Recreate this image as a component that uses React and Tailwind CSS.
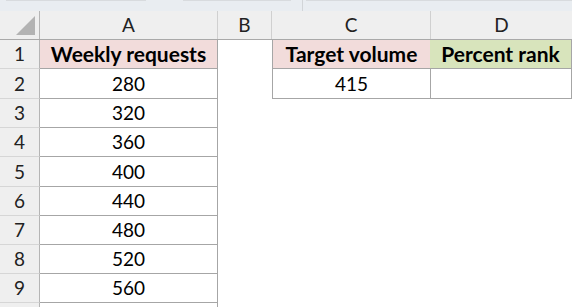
import React from "react";

const rows = [
  { n: 1, h: "h-[29px]" },
  { n: 2, h: "h-[30px]" },
  { n: 3, h: "h-[29px]" },
  { n: 4, h: "h-[29px]" },
  { n: 5, h: "h-[30px]" },
  { n: 6, h: "h-[29px]" },
  { n: 7, h: "h-[29px]" },
  { n: 8, h: "h-[29px]" },
  { n: 9, h: "h-[29px]" },
];

const aVals = ["Weekly requests", "280", "320", "360", "400", "440", "480", "520", "560"];

export default function App() {
  const font = { fontFamily: "Lato, 'Open Sans', sans-serif" };
  return (
    <div className="w-[572px] h-[307px] overflow-hidden bg-white text-[19px] leading-[20px]" style={font}>
      {/* top strip */}
      <div className="h-[11px] bg-[#e9edf1] flex">
        <div className="w-[6px]" />
        <div className="w-[140px] h-px bg-[#d8dbde]" />
        <div className="w-[37px]" />
        <div className="w-[108px] h-px bg-[#d8dbde]" />
        <div className="w-[11px]" />
        <div className="w-px h-[11px] bg-[#d2d5d8]" />
        <div className="w-[3px]" />
        <div className="flex-1 h-px bg-[#d8dbde]" />
      </div>
      {/* column headers */}
      <div className="grid grid-cols-[40px_178px_54px_159px_141px] grid-rows-[28px] h-[29px] bg-[#efefef] border-b border-[#a9a9a9] text-[#222]">
        <div className="relative border-r border-[#b5b5b5]">
          <div className="absolute left-[16px] top-[5px] w-0 h-0 border-l-[19px] border-l-transparent border-b-[19px] border-b-[#b3b3b3]" />
        </div>
        <div className="flex items-center justify-center border-r border-[#d0d0d0]">A</div>
        <div className="flex items-center justify-center border-r border-[#d0d0d0]">B</div>
        <div className="flex items-center justify-center border-r border-[#d0d0d0]">C</div>
        <div className="flex items-center justify-center">D</div>
      </div>
      {rows.map((r, i) => (
        <div key={r.n} className={`grid grid-cols-[40px_178px_54px_159px_141px] grid-rows-[100%] overflow-hidden ${r.h}`}>
          <div className="flex items-center justify-center bg-[#efefef] border-r border-b border-r-[#b5b5b5] border-b-[#d6d6d6] text-[#222]">
            {r.n}
          </div>
          <div
            className={`flex items-center justify-center border-r border-b border-[#a6a6a6] text-black ${
              i === 0 ? "bg-[#f2dcdb] font-bold text-[21px]" : "bg-white"
            }`}
          >
            {aVals[i]}
          </div>
          <div />
          {i === 0 && (
            <>
              <div className="flex items-center justify-center border-l border-r border-b border-[#a6a6a6] bg-[#f2dcdb] font-bold text-[21px] text-black">
                Target volume
              </div>
              <div className="flex items-center justify-center border-r border-b border-[#a6a6a6] bg-[#d8e4bc] font-bold text-[21px] text-black -ml-px">
                Percent rank
              </div>
            </>
          )}
          {i === 1 && (
            <>
              <div className="flex items-center justify-center border-l border-r border-b border-[#a6a6a6] text-black">
                415
              </div>
              <div className="border-r border-b border-[#a6a6a6] -ml-px" />
            </>
          )}
        </div>
      ))}
      <div className="grid grid-cols-[40px_178px_54px_159px_141px] h-[10px]">
        <div className="bg-[#efefef] border-r border-[#b5b5b5]" />
        <div className="border-r border-[#a6a6a6]" />
      </div>
    </div>
  );
}
